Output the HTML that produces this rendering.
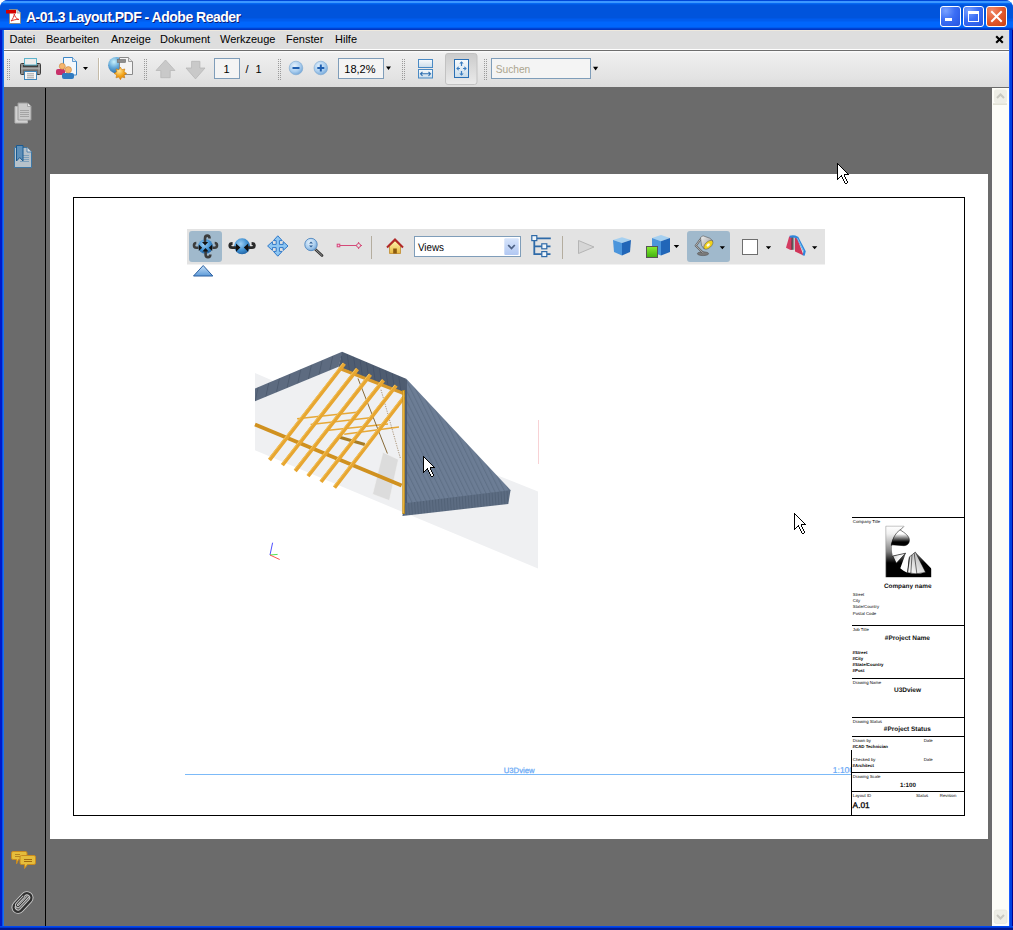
<!DOCTYPE html>
<html><head><meta charset="utf-8">
<style>
*{margin:0;padding:0;box-sizing:border-box}
html,body{width:1013px;height:930px;overflow:hidden;background:#fff;font-family:"Liberation Sans",sans-serif}
.a{position:absolute}
#win{position:absolute;left:0;top:0;width:1013px;height:930px;background:#0a46d8;border-radius:8px 8px 0 0;overflow:hidden}
#title{position:absolute;left:0;top:0;width:1013px;height:30px;
background:linear-gradient(to bottom,#0047d8 0px,#0047d8 1px,#3c98ff 1px,#3c98ff 3px,#0a6ffa 3px,#0062ec 4px,#0054dc 5px,#0054dc 18px,#005cee 19px,#005cee 21px,#0066fc 22px,#0066fc 27px,#0050e0 28px,#0036c4 29px,#0036c4 30px)}
#lb{position:absolute;left:0;top:30px;width:4px;height:900px;background:linear-gradient(to right,#0019c8 0,#0019c8 2px,#0a50e8 2px,#0a50e8 3px,#1870f0 3px)}
#rb{position:absolute;left:1009px;top:30px;width:4px;height:900px;background:linear-gradient(to right,#1a5cff 0,#1a5cff 1px,#0040e0 1px,#0040e0 3px,#000090 3px)}
#bb{position:absolute;left:0;top:926px;width:1013px;height:4px;background:linear-gradient(to bottom,#0048f0 0,#0048f0 1px,#0038d0 1px,#0038d0 2px,#001890 2px)}
#menu{position:absolute;left:4px;top:30px;width:1005px;height:19px;background:#e0dfe3;background:#dedede;font-size:11px;color:#000}
#menu span{position:absolute;top:3px}
#tb{position:absolute;left:4px;top:51px;width:1005px;height:36px;background:linear-gradient(to bottom,#fafafa 0,#fafafa 1px,#efefef 2px,#e4e4e4 70%,#dcdcdc)}
#view{position:absolute;left:4px;top:87px;width:1005px;height:839px;background:#6b6b6b}
#side{position:absolute;left:4px;top:87px;width:41px;height:839px;background:#6b6b6b}
#sline{position:absolute;left:45px;top:88px;width:1px;height:838px;background:#000}
#sb{position:absolute;left:992px;top:88px;width:17px;height:838px;background:#fdfdf8}
#page{position:absolute;left:50px;top:174px;width:938px;height:665px;background:#fff}
</style></head><body>
<div id="win">
  <div id="title"></div>
  <svg class="a" style="left:6px;top:8px" width="16" height="16" viewBox="0 0 16 16">
    <path d="M3.5 1.5 H11 L14.5 5 V15.5 H3.5 Z" fill="#fff" stroke="#8c8c8c" stroke-width="1"/>
    <path d="M11 1.5 V5 H14.5" fill="#ddd" stroke="#999" stroke-width="0.8"/>
    <rect x="0" y="2" width="10" height="3.5" fill="#d40000"/>
    <path d="M5 13 C7 11 8 8 8.3 6 C8.6 8 10 11 13 11.5 C10 11.2 7.5 12 5 13 Z" fill="none" stroke="#e0302a" stroke-width="1"/>
  </svg>
  <div class="a" style="left:27px;top:10px;font-size:14px;line-height:16px;font-weight:bold;color:#0a1e7a;white-space:pre;letter-spacing:-0.5px">A-01.3 Layout.PDF - Adobe Reader</div>
  <div class="a" style="left:26px;top:9px;font-size:14px;line-height:16px;font-weight:bold;color:#fff;white-space:pre;letter-spacing:-0.5px">A-01.3 Layout.PDF - Adobe Reader</div>
  <!-- caption buttons -->
  <div class="a" style="left:940px;top:6px;width:21px;height:21px;border:1px solid #fff;border-radius:3px;background:radial-gradient(circle at 25% 20%,#7aa2ff 0%,#3b6ef5 45%,#2453e0 100%)"></div>
  <div class="a" style="left:945px;top:18px;width:7px;height:3px;background:#fff"></div>
  <div class="a" style="left:963px;top:6px;width:21px;height:21px;border:1px solid #fff;border-radius:3px;background:radial-gradient(circle at 25% 20%,#7aa2ff 0%,#3b6ef5 45%,#2453e0 100%)"></div>
  <div class="a" style="left:968px;top:11px;width:11px;height:11px;border:1px solid #fff;border-top-width:3px"></div>
  <div class="a" style="left:986px;top:6px;width:21px;height:21px;border:1px solid #fff;border-radius:3px;background:radial-gradient(circle at 25% 20%,#f08a6a 0%,#e35a2f 50%,#c9400f 100%)"></div>
  <svg class="a" style="left:986px;top:6px" width="21" height="21" viewBox="0 0 21 21"><path d="M6 6 L15 15 M15 6 L6 15" stroke="#fff" stroke-width="2" stroke-linecap="square"/></svg>
  <div id="lb"></div><div id="rb"></div><div id="bb"></div>
  <div id="menu">
    <span style="left:5.5px">Datei</span>
    <span style="left:42px">Bearbeiten</span>
    <span style="left:107px">Anzeige</span>
    <span style="left:156px">Dokument</span>
    <span style="left:216px">Werkzeuge</span>
    <span style="left:282px">Fenster</span>
    <span style="left:331px">Hilfe</span>
  </div>
  <div class="a" style="left:4px;top:30px;width:1005px;height:1px;background:#efe9dd"></div>
  <svg class="a" style="left:995px;top:35px" width="9" height="9" viewBox="0 0 9 9"><path d="M1.2 1.2 L7.8 7.8 M7.8 1.2 L1.2 7.8" stroke="#000" stroke-width="2.1"/></svg>
  <div class="a" style="left:4px;top:49px;width:1005px;height:1px;background:#fff"></div>
  <div class="a" style="left:4px;top:50px;width:1005px;height:1px;background:#6e6e6e"></div>
  <div id="tb"></div>
  <svg class="a" style="left:0;top:50px" width="1013" height="37" viewBox="0 50 1013 37">
    <defs>
      <pattern id="grip" x="7" y="59" width="2" height="2" patternUnits="userSpaceOnUse"><rect x="0" y="0" width="1" height="1" fill="#9a9a9a"/></pattern>
      <linearGradient id="prbody" x1="0" y1="0" x2="0" y2="1"><stop offset="0" stop-color="#8a8a8a"/><stop offset="0.35" stop-color="#3e3e3e"/><stop offset="0.6" stop-color="#777"/><stop offset="1" stop-color="#4a4a4a"/></linearGradient>
      <radialGradient id="zoomc" cx="0.4" cy="0.35" r="0.7"><stop offset="0" stop-color="#e6f2fc"/><stop offset="0.6" stop-color="#a9cdee"/><stop offset="1" stop-color="#6fa3d6"/></radialGradient>
      <radialGradient id="globe" cx="0.35" cy="0.3" r="0.8"><stop offset="0" stop-color="#bfe3f7"/><stop offset="0.5" stop-color="#4a98cf"/><stop offset="1" stop-color="#1d5f9f"/></radialGradient>
      <linearGradient id="pressed" x1="0" y1="0" x2="0" y2="1"><stop offset="0" stop-color="#cbcbcb"/><stop offset="1" stop-color="#ebebeb"/></linearGradient>
      <linearGradient id="fitg" x1="0" y1="0" x2="0" y2="1"><stop offset="0" stop-color="#f8fbfd"/><stop offset="1" stop-color="#c9dcea"/></linearGradient>
    </defs>
    <!-- grippers -->
    <path d="M7 59h1v1h-1zM9 59h1v1h-1zM7 61h1v1h-1zM9 61h1v1h-1zM7 63h1v1h-1zM9 63h1v1h-1zM7 65h1v1h-1zM9 65h1v1h-1zM7 67h1v1h-1zM9 67h1v1h-1zM7 69h1v1h-1zM9 69h1v1h-1zM7 71h1v1h-1zM9 71h1v1h-1zM7 73h1v1h-1zM9 73h1v1h-1zM7 75h1v1h-1zM9 75h1v1h-1zM7 77h1v1h-1zM9 77h1v1h-1zM7 79h1v1h-1zM9 79h1v1h-1zM144 59h1v1h-1zM146 59h1v1h-1zM144 61h1v1h-1zM146 61h1v1h-1zM144 63h1v1h-1zM146 63h1v1h-1zM144 65h1v1h-1zM146 65h1v1h-1zM144 67h1v1h-1zM146 67h1v1h-1zM144 69h1v1h-1zM146 69h1v1h-1zM144 71h1v1h-1zM146 71h1v1h-1zM144 73h1v1h-1zM146 73h1v1h-1zM144 75h1v1h-1zM146 75h1v1h-1zM144 77h1v1h-1zM146 77h1v1h-1zM144 79h1v1h-1zM146 79h1v1h-1zM278 59h1v1h-1zM280 59h1v1h-1zM278 61h1v1h-1zM280 61h1v1h-1zM278 63h1v1h-1zM280 63h1v1h-1zM278 65h1v1h-1zM280 65h1v1h-1zM278 67h1v1h-1zM280 67h1v1h-1zM278 69h1v1h-1zM280 69h1v1h-1zM278 71h1v1h-1zM280 71h1v1h-1zM278 73h1v1h-1zM280 73h1v1h-1zM278 75h1v1h-1zM280 75h1v1h-1zM278 77h1v1h-1zM280 77h1v1h-1zM278 79h1v1h-1zM280 79h1v1h-1zM402 59h1v1h-1zM404 59h1v1h-1zM402 61h1v1h-1zM404 61h1v1h-1zM402 63h1v1h-1zM404 63h1v1h-1zM402 65h1v1h-1zM404 65h1v1h-1zM402 67h1v1h-1zM404 67h1v1h-1zM402 69h1v1h-1zM404 69h1v1h-1zM402 71h1v1h-1zM404 71h1v1h-1zM402 73h1v1h-1zM404 73h1v1h-1zM402 75h1v1h-1zM404 75h1v1h-1zM402 77h1v1h-1zM404 77h1v1h-1zM402 79h1v1h-1zM404 79h1v1h-1zM484 59h1v1h-1zM486 59h1v1h-1zM484 61h1v1h-1zM486 61h1v1h-1zM484 63h1v1h-1zM486 63h1v1h-1zM484 65h1v1h-1zM486 65h1v1h-1zM484 67h1v1h-1zM486 67h1v1h-1zM484 69h1v1h-1zM486 69h1v1h-1zM484 71h1v1h-1zM486 71h1v1h-1zM484 73h1v1h-1zM486 73h1v1h-1zM484 75h1v1h-1zM486 75h1v1h-1zM484 77h1v1h-1zM486 77h1v1h-1zM484 79h1v1h-1zM486 79h1v1h-1z" fill="#9a9a9a" shape-rendering="crispEdges"/>
    <!-- printer -->
    <rect x="20.5" y="63.5" width="20" height="11" rx="1" fill="#8e8e8e" stroke="#3c3c3c" stroke-width="1"/>
    <rect x="23" y="65" width="15" height="2.5" fill="#3e3e3e"/>
    <rect x="21" y="67.5" width="19" height="2" fill="#a9a9a9"/>
    <rect x="23" y="69.5" width="15" height="5" fill="#6e6e6e"/>
    <rect x="24.5" y="58.5" width="12" height="6.5" fill="#ececec" stroke="#5eb4cc"/>
    <rect x="24.5" y="71.5" width="12" height="8" fill="#f6f6f6" stroke="#3f86bb"/>
    <path d="M27 73.8h7M27 75.8h7M27 77.8h7" stroke="#8a8a8a" stroke-width="0.8"/>
    <!-- share -->
    <path d="M63.5 57.5h9l4 4v13.5h-13z" fill="#f4f8fc" stroke="#3d86c6"/>
    <path d="M72.5 57.5v4h4" fill="#dfeaf3" stroke="#3d86c6" stroke-width="0.8"/>
    <rect x="56" y="69" width="9" height="6" rx="2" fill="#c8316a"/>
    <circle cx="62.3" cy="66.3" r="3" fill="#f6b66e" stroke="#c7873e" stroke-width="0.6"/>
    <rect x="62" y="73" width="12" height="6" rx="2" fill="#2f7bc2"/>
    <circle cx="68.3" cy="69.8" r="3.2" fill="#f6b66e" stroke="#c7873e" stroke-width="0.6"/>
    <path d="M83 67h5l-2.5 3z" fill="#000"/>
    <!-- separator -->
    <rect x="98" y="58" width="1" height="22" fill="#c5bba8"/>
    <rect x="99" y="58" width="1" height="22" fill="#fff"/>
    <!-- globe doc -->
    <defs><radialGradient id="globe2" cx="0.35" cy="0.3" r="0.8"><stop offset="0" stop-color="#c8f0fa"/><stop offset="0.45" stop-color="#62a8d8"/><stop offset="1" stop-color="#1f5f9f"/></radialGradient>
    <radialGradient id="starg" cx="0.4" cy="0.3" r="0.8"><stop offset="0" stop-color="#ffe7a0"/><stop offset="0.5" stop-color="#f2a51c"/><stop offset="1" stop-color="#e07a00"/></radialGradient></defs>
    <circle cx="116.4" cy="65.2" r="8.3" fill="url(#globe2)"/>
    <path d="M119.5 57.5h9l4 4v13h-13z" fill="#f4f4f4" stroke="#8a8a8a"/>
    <path d="M128.5 57.5v4h4" fill="#e4e4e4" stroke="#8a8a8a" stroke-width="0.8"/>
    <rect x="117.2" y="59.4" width="8.5" height="3.2" fill="#8c8c8c" stroke="#666" stroke-width="0.5"/>
    <path d="M120.40 67.10 L121.93 69.70 L124.85 68.95 L124.10 71.87 L126.70 73.40 L124.10 74.93 L124.85 77.85 L121.93 77.10 L120.40 79.70 L118.87 77.10 L115.95 77.85 L116.70 74.93 L114.10 73.40 L116.70 71.87 L115.95 68.95 L118.87 69.70 Z" fill="url(#starg)" stroke="#c07000" stroke-width="0.5"/>
    <!-- up/down arrows -->
    <path d="M165.5 60 L175 70.5 H170.2 V77.7 H160.8 V70.5 H156 Z" fill="#c9c9c9" stroke="#b7b7b7" stroke-width="0.8"/>
    <path d="M191.6 61.3 H199.9 V68 H205 L195.5 78.9 L186 68 H191.6 Z" fill="#c9c9c9" stroke="#b7b7b7" stroke-width="0.8"/>
    <!-- page box -->
    <rect x="214.5" y="58.5" width="25" height="20" fill="#f4f4f4" stroke="#7f9db9"/>
    <text x="226.5" y="72.5" font-size="11" text-anchor="middle" fill="#000" font-family="Liberation Sans">1</text>
    <text x="245.5" y="72.5" font-size="11" fill="#000" font-family="Liberation Sans">/</text>
    <text x="255.5" y="72.5" font-size="11" fill="#000" font-family="Liberation Sans">1</text>
    <!-- zoom out/in -->
    <circle cx="296" cy="68" r="6.8" fill="url(#zoomc)" stroke="#7ea9d2" stroke-width="0.6"/>
    <rect x="292.5" y="67" width="7" height="2" fill="#1f5fb0"/>
    <circle cx="320.8" cy="68" r="6.8" fill="url(#zoomc)" stroke="#7ea9d2" stroke-width="0.6"/>
    <rect x="317.3" y="67" width="7" height="2" fill="#1f5fb0"/>
    <rect x="319.8" y="64.5" width="2" height="7" fill="#1f5fb0"/>
    <!-- zoom box -->
    <rect x="338.5" y="58.5" width="45" height="20" fill="#f4f4f4" stroke="#7f9db9"/>
    <text x="344.3" y="72.5" font-size="11" fill="#000" font-family="Liberation Sans">18,2%</text>
    <path d="M386 66.6h5l-2.5 3.4z" fill="#000"/>
    <!-- fit width -->
    <rect x="418.5" y="59.5" width="14" height="8" fill="url(#fitg)" stroke="#4a8ac4"/>
    <rect x="418.5" y="69.5" width="14" height="8.5" fill="url(#fitg)" stroke="#4a8ac4"/>
    <path d="M420.5 73.8h10M422.5 71.8l-2 2 2 2M428.5 71.8l2 2-2 2" fill="none" stroke="#2e6fb0" stroke-width="1.1"/>
    <!-- fit page pressed -->
    <rect x="445.5" y="53.5" width="31.5" height="31" rx="2.5" fill="url(#pressed)" stroke="#c2c2c2"/>
    <rect x="454.5" y="59.5" width="14" height="18" fill="url(#fitg)" stroke="#2a6fb4"/>
    <path d="M461.5 62.5V66M461.5 71V74.5M457.5 68.5H460M463 68.5H465.5" fill="none" stroke="#3a7cc0" stroke-width="1.2"/>
    <path d="M459.3 63.6L461.5 61.2L463.7 63.6ZM459.3 73.4L461.5 75.8L463.7 73.4ZM458.6 66.3L456.2 68.5L458.6 70.7ZM464.4 66.3L466.8 68.5L464.4 70.7Z" fill="#3a7cc0"/>
    <!-- search -->
    <rect x="491.5" y="58.5" width="99" height="20" fill="#f4f4f4" stroke="#7f9db9"/>
    <text x="495.7" y="73.3" font-size="11" fill="#aca48e" font-family="Liberation Sans" textLength="34.6" lengthAdjust="spacingAndGlyphs">Suchen</text>
    <path d="M593 66.8h5.2l-2.6 3.6z" fill="#000"/>
  </svg>
  <div id="view"></div>
  <div id="sline"></div>
  <div id="sb"></div>
  <svg class="a" style="left:0;top:87px" width="1013" height="839" viewBox="0 87 1013 839">
    <!-- pages icon -->
    <path d="M15 106.5h12.5v16.5h-12.5z" fill="#d2d2d2" stroke="#b4b4b4"/>
    <path d="M18 103h9.5l3.5 3.5v13.5h-13z" fill="#cbcbcb" stroke="#9c9c9c"/>
    <path d="M27.5 103v3.5h3.5" fill="#e8e8e8" stroke="#9c9c9c" stroke-width="0.8"/>
    <path d="M20 110.5h9M20 112.5h9M20 114.5h9M20 116.5h9" stroke="#999" stroke-width="0.8"/>
    <!-- bookmarks icon -->
    <path d="M14.5 147.5h12.5l4.5 4.5v15.5h-17z" fill="#b6c2cb" stroke="#3f77a4"/>
    <path d="M27 147.5v4.5h4.5" fill="#dde3e8" stroke="#3f77a4" stroke-width="0.8"/>
    <path d="M23 155.5h6M23 157.5h6M23 159.5h6M20 161.5h9" stroke="#6f97b8" stroke-width="0.8"/>
    <path d="M16.5 145.5h6.5v15.5l-3.25-3.5-3.25 3.5z" fill="#5e8fb8" stroke="#1b5a90"/>
    <!-- comments -->
    <path d="M13 851.5h12.5a1.5 1.5 0 0 1 1.5 1.5v5a1.5 1.5 0 0 1-1.5 1.5h-7l-2 4.5v-4.5h-3.5a1.5 1.5 0 0 1-1.5-1.5v-5a1.5 1.5 0 0 1 1.5-1.5z" fill="#e5bd3c" stroke="#c98a1e"/>
    <path d="M15 854.5h5M15 856.5h5" stroke="#a8761a" stroke-width="0.8"/>
    <path d="M21.5 855.5h12.5a1.5 1.5 0 0 1 1.5 1.5v6a1.5 1.5 0 0 1-1.5 1.5h-6.5l-3 4v-4h-3a1.5 1.5 0 0 1-1.5-1.5v-6a1.5 1.5 0 0 1 1.5-1.5z" fill="#e5bd3c" stroke="#c98a1e"/>
    <path d="M24 859.5h8M24 861.5h8" stroke="#a06a10" stroke-width="1"/>
    <!-- paperclip -->
    <g transform="rotate(-47 22.5 902.5)">
      <rect x="11.5" y="898" width="22" height="9" rx="4.5" fill="none" stroke="#cfcfcf" stroke-width="4.2"/>
      <rect x="11.5" y="898" width="22" height="9" rx="4.5" fill="none" stroke="#303030" stroke-width="2.4"/>
      <path d="M31 902.5 H17.5 a1.6 1.6 0 0 1 0 -3.2 H28" fill="none" stroke="#cfcfcf" stroke-width="2.6"/>
      <path d="M31 902.5 H17.5 a1.6 1.6 0 0 1 0 -3.2 H28" fill="none" stroke="#303030" stroke-width="1"/>
    </g>
    <!-- scrollbar buttons -->
    <rect x="994" y="89.5" width="13" height="13.5" rx="2" fill="#eeeee6"/>
    <rect x="993" y="103.5" width="14" height="1.2" fill="#d6d6c6"/>
    <path d="M997 98 L1000.5 94.5 L1004 98" fill="none" stroke="#c8c8c0" stroke-width="2"/>
    <rect x="994.3" y="910" width="12.7" height="13.5" rx="2" fill="#eeeee6" stroke="#e2e2d8" stroke-width="0.6"/>
    <path d="M997 915 L1000.5 918.5 L1004 915" fill="none" stroke="#c8c8c0" stroke-width="2"/>
  </svg>
  <div id="page"></div>
  <svg class="a" style="left:0;top:0;text-rendering:geometricPrecision" width="1013" height="930" viewBox="0 0 1013 930" font-family="Liberation Sans">
    <!-- frame -->
    <g fill="#000">
      <rect x="73" y="197" width="892" height="1"/>
      <rect x="73" y="815" width="892" height="1"/>
      <rect x="73" y="197" width="1" height="619"/>
      <rect x="964" y="197" width="1" height="619"/>
      <rect x="852" y="517" width="112" height="1"/>
      <rect x="852" y="625" width="112" height="1"/>
      <rect x="852" y="678" width="112" height="1"/>
      <rect x="852" y="717" width="112" height="1"/>
      <rect x="852" y="736" width="112" height="1"/>
      <rect x="852" y="772" width="112" height="1"/>
      <rect x="852" y="791" width="112" height="1"/>
      <rect x="851" y="750" width="1" height="66"/>
    </g>
    <!-- title block text -->
    <g fill="#000" font-size="4.3">
      <text x="852.8" y="523.1">Company Title</text>
      <text x="852.8" y="596.1">Street</text>
      <text x="852.8" y="601.9">City</text>
      <text x="852.8" y="608">State/Country</text>
      <text x="852.8" y="615.1">Postal Code</text>
      <text x="852.8" y="631.2">Job Title</text>
      <text x="852.8" y="684.2">Drawing Name</text>
      <text x="852.8" y="723">Drawing Status</text>
      <text x="852.8" y="742.1">Drawn by</text>
      <text x="923.7" y="742.1">Date</text>
      <text x="852.8" y="761">Checked by</text>
      <text x="923.7" y="761">Date</text>
      <text x="852.8" y="777.9">Drawing Scale</text>
      <text x="852.8" y="797.1">Layout ID</text>
      <text x="916" y="797.1">Status</text>
      <text x="939.8" y="797.1">Revision</text>
    </g>
    <g fill="#000" font-size="4.35" font-weight="bold">
      <text x="852.6" y="654.3">#Street</text>
      <text x="852.6" y="660.1">#City</text>
      <text x="852.6" y="666.1">#State/Country</text>
      <text x="852.6" y="672">#Post</text>
      <text x="852.6" y="748.3">#CAD Technician</text>
      <text x="852.6" y="767">#Architect</text>
    </g>
    <g fill="#111" font-weight="bold" text-anchor="middle">
      <text x="907.7" y="588" font-size="6.4">Company name</text>
      <text x="907.4" y="640" font-size="6.5">#Project Name</text>
      <text x="907.5" y="691.7" font-size="6.5">U3Dview</text>
      <text x="907.3" y="731" font-size="6.45">#Project Status</text>
      <text x="908" y="787" font-size="6.25">1:100</text>
    </g>
    <text x="852.6" y="807.6" font-size="8.3" fill="#000" stroke="#000" stroke-width="0.3">A.01</text>
    <!-- logo -->
    <defs>
      <linearGradient id="lg1" x1="0" y1="0" x2="0" y2="1"><stop offset="0" stop-color="#fff"/><stop offset="0.15" stop-color="#f0f0f0"/><stop offset="0.5" stop-color="#808080"/><stop offset="0.72" stop-color="#000"/><stop offset="1" stop-color="#000"/></linearGradient>
      <linearGradient id="lg2" gradientUnits="userSpaceOnUse" x1="0" y1="534" x2="0" y2="542"><stop offset="0" stop-color="#fff"/><stop offset="1" stop-color="#000"/></linearGradient>
      <linearGradient id="lg3" gradientUnits="userSpaceOnUse" x1="893" y1="555" x2="903" y2="560"><stop offset="0" stop-color="#c8c8c8"/><stop offset="0.6" stop-color="#f8f8f8"/><stop offset="1" stop-color="#e8e8e8"/></linearGradient>
      <linearGradient id="lg4" gradientUnits="userSpaceOnUse" x1="908" y1="572" x2="922" y2="556"><stop offset="0" stop-color="#fff"/><stop offset="1" stop-color="#b8b8b8"/></linearGradient>
    </defs>
    <rect x="885.8" y="526.2" width="45.4" height="51" fill="url(#lg1)"/><path d="M904 526.2 H885.8 V577.2" fill="none" stroke="#8a8a8a" stroke-width="0.5"/>
    <path d="M904 525.6 H932 V569.3 L915.3 552 L909 557 L907.5 572.8 C904.5 571.5 902.3 570 900.3 568.2 L905.8 553.2 L892.8 556 C890.5 548 892.5 537 900.3 530 Z" fill="#fff"/>
    <path d="M904 526.3 L900.3 530 C895.5 534 892.2 540 891.3 546" fill="none" stroke="#000" stroke-width="0.5"/>
    <path d="M900 529.8 C905 533 909.5 536 909.4 540.5 C909.3 543.5 907 545.7 904 545.7 L891.3 544.8 C892.5 538.5 895.5 533 900 529.8 Z" fill="url(#lg2)" stroke="#000" stroke-width="0.5"/>
    <path d="M892.8 556 L905.6 553.2 L896.3 563.2 Z" fill="url(#lg3)" stroke="#000" stroke-width="0.6"/>
    <path d="M909.4 557 L915.3 552 L925.5 572.2 Q916 575.2 907.5 572.6 Z" fill="url(#lg4)" stroke="#000" stroke-width="0.4"/>
    <path d="M909.6 557.5 L907.6 572.5 M912 555 L910.8 573.6 M914.2 553.2 L916.9 574" stroke="#000" stroke-width="0.55"/>
    <!-- 3D toolbar -->
    <defs>
      <radialGradient id="sph" cx="0.4" cy="0.35" r="0.7"><stop offset="0" stop-color="#9fd0f5"/><stop offset="0.6" stop-color="#3f8fd0"/><stop offset="1" stop-color="#1e5f9f"/></radialGradient>
      <linearGradient id="tri" x1="0" y1="0" x2="0" y2="1"><stop offset="0" stop-color="#c6e0f8"/><stop offset="1" stop-color="#5d9ad8"/></linearGradient>
      <linearGradient id="ddb" x1="0" y1="0" x2="0" y2="1"><stop offset="0" stop-color="#d6e4fb"/><stop offset="1" stop-color="#b2c8f2"/></linearGradient>
      <linearGradient id="grn" x1="0" y1="0" x2="0" y2="1"><stop offset="0" stop-color="#88ee30"/><stop offset="1" stop-color="#40b010"/></linearGradient>
      <linearGradient id="house" x1="0" y1="0" x2="0" y2="1"><stop offset="0" stop-color="#fff4b0"/><stop offset="1" stop-color="#e8b840"/></linearGradient>
    </defs>
    <rect x="187" y="229" width="638" height="35.5" fill="#e3e3e3"/>
    <rect x="189" y="231" width="33" height="31" rx="3" fill="#a0b9cc"/>
    <rect x="687" y="231" width="43" height="31" rx="3" fill="#a0b9cc"/>
    <path d="M193.5 276 L203.2 265.5 L212.8 276 Z" fill="url(#tri)" stroke="#2a5fa0" stroke-width="1"/>
    <!-- rotate -->
    <circle cx="205.5" cy="246.5" r="7.3" fill="url(#sph)"/>
    <g fill="none" stroke="#3c3c3c" stroke-width="2.6">
      <path d="M205 242.5 V238.5 Q205 235.6 207.3 235.6 Q209.6 235.6 209.6 238.6"/>
      <path d="M198.5 247.8 H196.3 Q194 247.8 194 245.3 Q194 243 196.3 243"/>
      <path d="M212.5 247.8 H214.7 Q217 247.8 217 245.3 Q217 243 214.7 243"/>
      <path d="M205.6 251 V254.5 Q205.6 257.2 208 257.2 Q210.3 257.2 210.3 254.6"/>
    </g>
    <path d="M202 242 H208.2 L205.1 245.6 Z M198.8 244.4 V251 L202.2 247.7 Z M212.2 244.4 V251 L208.8 247.7 Z M202.4 251.5 H208.6 L205.5 248 Z" fill="#111"/>
    <!-- spin -->
    <circle cx="242.1" cy="246.3" r="8" fill="url(#sph)"/>
    <path d="M236.5 247.6 H232.2 Q229.8 247.6 229.8 245.5 Q229.8 243.5 232.6 243.5 M247.7 247.6 H252 Q254.4 247.6 254.4 245.5 Q254.4 243.5 251.6 243.5" fill="none" stroke="#2a2a2a" stroke-width="2.8"/>
    <path d="M236 243.4 V251.8 L240.4 247.6 Z M248.2 243.4 V251.8 L243.8 247.6 Z" fill="#111"/>
    <!-- pan -->
    <path d="M277.8 235.8 L282.2 240.6 H279.4 V244.4 H283.2 V241.6 L288 246 L283.2 250.4 V247.6 H279.4 V251.4 H282.2 L277.8 256.2 L273.4 251.4 H276.2 V247.6 H272.4 V250.4 L267.6 246 L272.4 241.6 V244.4 H276.2 V240.6 H273.4 Z" fill="#8ec6f2" stroke="#2f78c8" stroke-width="1" stroke-linejoin="round"/>
    <!-- zoom -->
    <line x1="315.5" y1="249.5" x2="322" y2="255.5" stroke="#333" stroke-width="2.6" stroke-linecap="round"/>
    <line x1="315.5" y1="249.5" x2="322" y2="255.5" stroke="#9a9a9a" stroke-width="1" stroke-linecap="round"/>
    <circle cx="311" cy="244.5" r="6.2" fill="url(#zoomc)" stroke="#5b8fc4" stroke-width="1"/>
    <path d="M309 243.5 L311 241.5 L313 243.5 Z M309 245.5 L311 247.5 L313 245.5 Z" fill="#2f5f95"/>
    <!-- measure -->
    <rect x="337.2" y="244.2" width="2.6" height="2.6" fill="#fbe" stroke="#d44a78" stroke-width="1"/>
    <path d="M340 245.5 H356.6 M360.6 245.5 H362 M358.6 242 V243.5 M358.6 247.5 V249" stroke="#d44a78" stroke-width="1"/>
    <circle cx="358.6" cy="245.5" r="2" fill="none" stroke="#d44a78" stroke-width="1"/>
    <rect x="371" y="236" width="1" height="23" fill="#b4ad9f"/>
    <!-- home -->
    <path d="M389.5 246 V253.5 H400.5 V246 L395 241 Z" fill="url(#house)" stroke="#c08a30" stroke-width="0.8"/>
    <path d="M387 247.5 L395 239.5 L403 247.5" fill="none" stroke="#b02828" stroke-width="2"/>
    <rect x="393.2" y="248.5" width="3.6" height="5" fill="#8a5a10"/>
    <!-- views -->
    <rect x="414.5" y="236.5" width="106" height="20" fill="#fff" stroke="#7f9db9"/>
    <text x="418" y="250.8" font-size="11" fill="#000" textLength="26" lengthAdjust="spacingAndGlyphs">Views</text>
    <rect x="504.3" y="238.3" width="14.4" height="16.6" rx="1" fill="url(#ddb)"/>
    <path d="M508.2 245 L511.5 248.5 L514.8 245" fill="none" stroke="#4d6185" stroke-width="1.8"/>
    <!-- tree -->
    <g stroke="#2e6aa8" stroke-width="1.8" fill="none">
      <path d="M534.3 240 V254.2 H542 M534.3 246.4 H542 M537 238.3 H550.8 M547 246.4 H550.5 M547 254.2 H550.5"/>
    </g>
    <g fill="#eef5fb" stroke="#2e6aa8" stroke-width="1.2">
      <rect x="531.8" y="235.6" width="5" height="5"/>
      <rect x="541.8" y="243.8" width="5" height="5"/>
      <rect x="541.8" y="251.6" width="5" height="5"/>
    </g>
    <rect x="562" y="236" width="1" height="23" fill="#b4ad9f"/>
    <!-- play -->
    <path d="M578.5 240.5 L594 247 L578.5 253.5 Z" fill="#d6d6d6" stroke="#b5b5b5" stroke-width="1"/>
    <!-- cube1 -->
    <path d="M613 240 L622 237.3 L631 240 L622 243 Z" fill="#a6d0f0"/>
    <path d="M613 240 L622 243 V255.6 L614 252 Z" fill="#4b95dc"/>
    <path d="M631 240 L622 243 V255.6 L630 252 Z" fill="#2166b8"/>
    <!-- cube2 -->
    <path d="M652 238 L661 234.9 L670 238 L661 241.2 Z" fill="#a6d0f0"/>
    <path d="M652 238 L661 241.2 V255.6 L652 252 Z" fill="#4b95dc"/>
    <path d="M670 238 L661 241.2 V255.6 L670 252 Z" fill="#2166b8"/>
    <rect x="646.5" y="246.5" width="11" height="11" fill="url(#grn)" stroke="#555" stroke-width="1"/>
    <path d="M673.7 245 h5.5 l-2.75 3z M719.7 246.2 h5.3 l-2.65 3z M765.8 246.2 h5.4 l-2.7 3z M812 246.2 h5.3 l-2.65 3z" fill="#000"/>
    <!-- lamp -->
    <defs><linearGradient id="shade" x1="0" y1="0" x2="1" y2="1"><stop offset="0" stop-color="#f2f2f2"/><stop offset="1" stop-color="#8a8a8a"/></linearGradient></defs>
    <ellipse cx="703" cy="253.7" rx="5.6" ry="1.9" fill="#7a7a7a" stroke="#555" stroke-width="0.6"/>
    <path d="M703 252.8 L695.8 245.6 L701.2 238.4" fill="none" stroke="#5a5a5a" stroke-width="2"/>
    <path d="M703 252.8 L695.8 245.6 L701.2 238.4" fill="none" stroke="#cfcfcf" stroke-width="0.8"/>
    <path d="M700.5 237.5 L703 235.8 L709.8 238.2 L713 241 L704.2 249 L701.5 245.5 Z" fill="url(#shade)" stroke="#555" stroke-width="0.6"/>
    <ellipse cx="708.4" cy="244.8" rx="5.6" ry="3" transform="rotate(-43 708.4 244.8)" fill="#f2d21a" stroke="#555" stroke-width="0.5"/>
    <ellipse cx="708.2" cy="245" rx="2" ry="1.2" transform="rotate(-43 708.2 245)" fill="#fffbe0"/>
    <!-- white square -->
    <rect x="742.5" y="239.5" width="15" height="15" fill="#fff" stroke="#6e6e6e" stroke-width="1"/>
    <!-- prism -->
    <defs><linearGradient id="pstrip" x1="0" y1="0" x2="1" y2="0"><stop offset="0" stop-color="#2a2a2a"/><stop offset="1" stop-color="#e0e0e0"/></linearGradient></defs>
    <path d="M789.2 236.5 L791.8 236.5 L792.2 249.8 L790.5 250 L786 247.7 Z" fill="#d43c62"/>
    <rect x="791.6" y="237" width="3.4" height="12.8" fill="url(#pstrip)"/>
    <path d="M795 237.5 L797.2 238.6 L803.6 255.5 L795 251.6 Z" fill="#d0365a"/>
    <path d="M789.8 236.8 Q794 235.8 797.4 237.6 L804.6 251.5 L803.6 255.5" fill="none" stroke="#2f86dc" stroke-width="2.2"/>
    <path d="M797.4 238.2 L803.6 251" fill="none" stroke="#86d2f4" stroke-width="0.8"/>
    <!-- 3D model -->
    <defs>
      <pattern id="stripeR" x="0" y="0" width="4.4" height="8" patternUnits="userSpaceOnUse" patternTransform="rotate(-26)"><rect width="4.4" height="8" fill="#6c7d95"/><rect x="0" width="1.1" height="8" fill="#5f7087"/></pattern>
      <pattern id="stripeF" x="0" y="0" width="3" height="8" patternUnits="userSpaceOnUse" patternTransform="rotate(-4)"><rect width="3" height="8" fill="#5c6c82"/><rect x="0" width="1" height="8" fill="#526277"/></pattern>
      <pattern id="stripeL" x="0" y="0" width="9.5" height="10" patternUnits="userSpaceOnUse" patternTransform="rotate(12)"><rect width="9.5" height="10" fill="#5d6b80"/><rect x="0" width="1" height="10" fill="#4e5c70"/></pattern>
      <pattern id="stripeB" x="0" y="0" width="6" height="10" patternUnits="userSpaceOnUse" patternTransform="rotate(-8)"><rect width="6" height="10" fill="#4f5d71"/><rect x="0" width="1" height="10" fill="#45536a"/></pattern>
    </defs>
    <path d="M255 372.9 L273.5 380.9 L342.1 352.5 L407 379.5 L495 474.4 L538 491.5 V568.5 L255 450.3 Z" fill="#eff0f2"/>
    <path d="M382.9 452.3 L398.4 459.4 L389.4 500.6 L372.6 494.2 Z" fill="#dcdcdc" stroke="#f2f2f2" stroke-width="0.6"/>
    <path d="M255 388.6 L342.1 351.8 L342 354 L338.5 366.7 L255 401.3 Z" fill="url(#stripeL)"/>
    <path d="M342.1 351.8 L406.6 379.1 L406 394.5 L338.5 366.7 Z" fill="url(#stripeB)"/>
    <g stroke-linecap="butt" fill="none">
      <path d="M255 424.6 L401.6 485.6" stroke="#d0911f" stroke-width="3.8"/>
      <path d="M297.1 418.7 L357.1 412.3 M310.6 424.5 L372.6 417.4 M328.7 430.3 L388 423.9 M344.2 434.2 L399 427.1" stroke="#e6a838" stroke-width="1.5"/>
      <path d="M339.7 437.2 L364.8 444.5" stroke="#a87d25" stroke-width="3"/>
      <path d="M358 378.5 L387.4 453.5" stroke="#7a5a22" stroke-width="0.9"/>
      <path d="M381 389.8 L400.3 458" stroke="#8a6a40" stroke-width="0.7" stroke-dasharray="1.2 1.2"/>
      <path d="M338.5 368 L405 394" stroke="#d8992a" stroke-width="3.2"/>
      <g stroke="#e7a631" stroke-width="3.8">
        <path d="M269.5 460 L344.4 363.7 M282.4 465.2 L357.5 369 M295.2 471 L370.5 374.6 M308 476.1 L383.5 380.3 M321 481.9 L396.2 385.6 M334.5 487.7 L404.3 396.9"/>
      </g>
      <g stroke="#f3c25a" stroke-width="1">
        <path d="M268.8 458.6 L343 363 M281.7 463.8 L356.1 368.3 M294.5 469.6 L369.1 373.9 M307.3 474.7 L382.1 379.6 M320.3 480.5 L394.8 384.9 M333.8 486.3 L403 396.3"/>
      </g>
    </g>
    <path d="M405 379.5 L407 379.5 L510.5 490 L510.5 491 L404.6 504.3 Z" fill="url(#stripeR)"/>
    <path d="M404.6 503.3 L510.5 490.3 L508.3 504 L402.4 515.9 Z" fill="url(#stripeF)"/>
    <rect x="405.2" y="380" width="1.6" height="123" fill="#4a586c"/>
    <path d="M403.6 390 V514" stroke="#b98a1c" stroke-width="2.6"/>
    <path d="M403.4 391 V513" stroke="#eab23a" stroke-width="1.2"/>
    <path d="M538.5 420 V464" stroke="#f4b4b8" stroke-width="0.6"/>
    <path d="M270 555 L272.6 542.7" stroke="#3a3aff" stroke-width="0.9"/>
    <path d="M270 555 L277.6 554.4" stroke="#40e040" stroke-width="0.9"/>
    <path d="M270 555 L279.7 559.5" stroke="#ff4040" stroke-width="0.9"/>
    <!-- blue view line -->
    <rect x="185" y="774" width="666" height="1" fill="#7cbaf8"/>
    <text x="503.8" y="772.5" font-size="7.7" fill="#6aaaf6" stroke="#6aaaf6" stroke-width="0.25">U3Dview</text>
    <svg x="0" y="0" width="851" height="930"><text x="832.8" y="773" font-size="8.5" fill="#6aaaf6" stroke="#6aaaf6" stroke-width="0.2">1:100</text></svg>
    <g shape-rendering="crispEdges"><path d="M838 165h1v1h-1zM838 166h2v1h-2zM838 167h3v1h-3zM838 168h4v1h-4zM838 169h5v1h-5zM838 170h6v1h-6zM838 171h7v1h-7zM838 172h8v1h-8zM838 173h9v1h-9zM838 174h6v1h-6zM838 175h3v1h-3zM842 175h2v1h-2zM838 176h2v1h-2zM842 176h2v1h-2zM838 177h1v1h-1zM843 177h2v1h-2zM843 178h2v1h-2zM844 179h2v1h-2zM844 180h2v1h-2zM845 181h2v1h-2zM845 182h2v1h-2z" fill="#fff"/><path d="M837 163h1v1h-1zM837 164h2v1h-2zM837 165h1v1h-1zM839 165h1v1h-1zM837 166h1v1h-1zM840 166h1v1h-1zM837 167h1v1h-1zM841 167h1v1h-1zM837 168h1v1h-1zM842 168h1v1h-1zM837 169h1v1h-1zM843 169h1v1h-1zM837 170h1v1h-1zM844 170h1v1h-1zM837 171h1v1h-1zM845 171h1v1h-1zM837 172h1v1h-1zM846 172h1v1h-1zM837 173h1v1h-1zM847 173h1v1h-1zM837 174h1v1h-1zM844 174h5v1h-5zM837 175h1v1h-1zM841 175h1v1h-1zM844 175h1v1h-1zM837 176h1v1h-1zM840 176h2v1h-2zM844 176h1v1h-1zM837 177h1v1h-1zM839 177h1v1h-1zM842 177h1v1h-1zM845 177h1v1h-1zM837 178h2v1h-2zM842 178h1v1h-1zM845 178h1v1h-1zM837 179h1v1h-1zM843 179h1v1h-1zM846 179h1v1h-1zM843 180h1v1h-1zM846 180h1v1h-1zM844 181h1v1h-1zM847 181h1v1h-1zM844 182h1v1h-1zM847 182h1v1h-1zM845 183h2v1h-2z" fill="#000"/><path d="M795 515h1v1h-1zM795 516h2v1h-2zM795 517h3v1h-3zM795 518h4v1h-4zM795 519h5v1h-5zM795 520h6v1h-6zM795 521h7v1h-7zM795 522h8v1h-8zM795 523h9v1h-9zM795 524h6v1h-6zM795 525h3v1h-3zM799 525h2v1h-2zM795 526h2v1h-2zM799 526h2v1h-2zM795 527h1v1h-1zM800 527h2v1h-2zM800 528h2v1h-2zM801 529h2v1h-2zM801 530h2v1h-2zM802 531h2v1h-2zM802 532h2v1h-2z" fill="#fff"/><path d="M794 513h1v1h-1zM794 514h2v1h-2zM794 515h1v1h-1zM796 515h1v1h-1zM794 516h1v1h-1zM797 516h1v1h-1zM794 517h1v1h-1zM798 517h1v1h-1zM794 518h1v1h-1zM799 518h1v1h-1zM794 519h1v1h-1zM800 519h1v1h-1zM794 520h1v1h-1zM801 520h1v1h-1zM794 521h1v1h-1zM802 521h1v1h-1zM794 522h1v1h-1zM803 522h1v1h-1zM794 523h1v1h-1zM804 523h1v1h-1zM794 524h1v1h-1zM801 524h5v1h-5zM794 525h1v1h-1zM798 525h1v1h-1zM801 525h1v1h-1zM794 526h1v1h-1zM797 526h2v1h-2zM801 526h1v1h-1zM794 527h1v1h-1zM796 527h1v1h-1zM799 527h1v1h-1zM802 527h1v1h-1zM794 528h2v1h-2zM799 528h1v1h-1zM802 528h1v1h-1zM794 529h1v1h-1zM800 529h1v1h-1zM803 529h1v1h-1zM800 530h1v1h-1zM803 530h1v1h-1zM801 531h1v1h-1zM804 531h1v1h-1zM801 532h1v1h-1zM804 532h1v1h-1zM802 533h2v1h-2z" fill="#000"/><path d="M424 458h1v1h-1zM424 459h2v1h-2zM424 460h3v1h-3zM424 461h4v1h-4zM424 462h5v1h-5zM424 463h6v1h-6zM424 464h7v1h-7zM424 465h8v1h-8zM424 466h9v1h-9zM424 467h6v1h-6zM424 468h3v1h-3zM428 468h2v1h-2zM424 469h2v1h-2zM428 469h2v1h-2zM424 470h1v1h-1zM429 470h2v1h-2zM429 471h2v1h-2zM430 472h2v1h-2zM430 473h2v1h-2zM431 474h2v1h-2zM431 475h2v1h-2z" fill="#fff"/><path d="M423 456h1v1h-1zM423 457h2v1h-2zM423 458h1v1h-1zM425 458h1v1h-1zM423 459h1v1h-1zM426 459h1v1h-1zM423 460h1v1h-1zM427 460h1v1h-1zM423 461h1v1h-1zM428 461h1v1h-1zM423 462h1v1h-1zM429 462h1v1h-1zM423 463h1v1h-1zM430 463h1v1h-1zM423 464h1v1h-1zM431 464h1v1h-1zM423 465h1v1h-1zM432 465h1v1h-1zM423 466h1v1h-1zM433 466h1v1h-1zM423 467h1v1h-1zM430 467h5v1h-5zM423 468h1v1h-1zM427 468h1v1h-1zM430 468h1v1h-1zM423 469h1v1h-1zM426 469h2v1h-2zM430 469h1v1h-1zM423 470h1v1h-1zM425 470h1v1h-1zM428 470h1v1h-1zM431 470h1v1h-1zM423 471h2v1h-2zM428 471h1v1h-1zM431 471h1v1h-1zM423 472h1v1h-1zM429 472h1v1h-1zM432 472h1v1h-1zM429 473h1v1h-1zM432 473h1v1h-1zM430 474h1v1h-1zM433 474h1v1h-1zM430 475h1v1h-1zM433 475h1v1h-1zM431 476h2v1h-2z" fill="#000"/></g>
  </svg>
</div>
</body></html>
